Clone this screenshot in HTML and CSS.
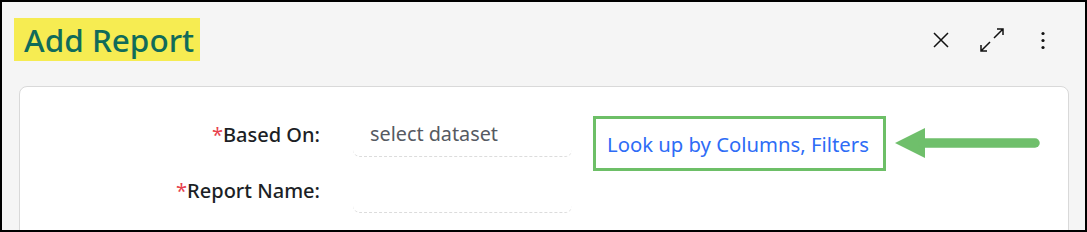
FILE: index.html
```html
<!DOCTYPE html>
<html>
<head>
<meta charset="utf-8">
<link rel="stylesheet" href="styles.css">
</head>
<body>
<div class="frame">
  <div class="header">
    <h1 class="title">Add Report</h1>
    <div class="actions">
      <svg class="icon" width="24" height="24" viewBox="0 0 24 24"><path d="M5 5 L19 19 M19 5 L5 19" stroke="#111" stroke-width="1.5" fill="none"/></svg>
      <svg class="icon" width="24" height="24" viewBox="0 0 24 24"><path d="M14 10 L23 1 M17 1 H23 V7 M10 14 L1 23 M1 17 V23 H7" stroke="#111" stroke-width="1.5" fill="none"/></svg>
      <svg class="icon" width="24" height="24" viewBox="0 0 24 24"><circle cx="12" cy="5.5" r="1.6" fill="#111"/><circle cx="12" cy="12.5" r="1.6" fill="#111"/><circle cx="12" cy="19.5" r="1.6" fill="#111"/></svg>
    </div>
  </div>
  <div class="card">
    <div class="row row-first">
      <label class="label"><span class="req">*</span>Based On:</label>
      <div class="input placeholder">select dataset</div>
      <a class="lookup" href="#">Look up by Columns, Filters</a>
      <svg class="arrow" width="148" height="32" viewBox="0 0 148 32"><polygon points="0,15 30,0 30,30" fill="#6fbf6b"/><line x1="28" y1="15" x2="140" y2="15" stroke="#6fbf6b" stroke-width="9.5" stroke-linecap="round"/></svg>
    </div>
    <div class="row">
      <label class="label"><span class="req">*</span>Report Name:</label>
      <div class="input"></div>
    </div>
  </div>
</div>
</body>
</html>
```
FILE: styles.css
```css
html, body {
  margin: 0;
  padding: 0;
}
body {
  font-family: "Noto Sans", "Open Sans", sans-serif;
}
.frame {
  width: 1087px;
  height: 232px;
  box-sizing: border-box;
  border: 2px solid #000;
  background: #f5f5f5;
  overflow: hidden;
}
.header {
  display: flex;
  justify-content: space-between;
  align-items: flex-start;
  padding: 16px 0 0 12px;
  height: 43px;
}
.title {
  margin: 0;
  background: #f6ec52;
  color: #106b5a;
  font-size: 31.5px;
  font-weight: 500;
  line-height: 43px;
  height: 43px;
  padding: 0 6px 0 10px;
}
.actions {
  display: flex;
  gap: 27px;
  margin-top: 9.5px;
  margin-right: 30px;
}
.icon {
  display: block;
}
.card {
  margin: 25px 16px 0 17px;
  background: #fff;
  border: 1px solid #d9d9d9;
  border-radius: 8px;
  height: 200px;
  padding-top: 29px;
  box-sizing: border-box;
}
.row {
  display: flex;
  align-items: flex-start;
}
.row-first {
  height: 55px;
  margin-bottom: 1px;
}
.label {
  width: 300px;
  text-align: right;
  font-size: 20px;
  font-weight: 500;
  line-height: 28px;
  color: #1c1f26;
  margin-top: 5px;
}
.req {
  color: #e8414d;
  font-weight: 400;
}
.input {
  margin-left: 33px;
  margin-top: 1px;
  width: 219px;
  height: 40px;
  box-sizing: border-box;
  border-bottom: 1px dashed #dcdcdc;
  border-radius: 0 0 7px 7px;
  padding: 5px 0 0 17px;
  font-size: 19.8px;
  line-height: 24px;
}
.placeholder {
  color: #565a62;
}
.lookup {
  margin-left: 21px;
  width: 293px;
  height: 55px;
  box-sizing: border-box;
  border: 3px solid #6dbf67;
  padding-left: 11px;
  display: flex;
  align-items: center;
  color: #2e6cf6;
  text-decoration: none;
  font-size: 20.3px;
}
.arrow {
  display: block;
  margin-left: 9px;
  margin-top: 12px;
}
```
